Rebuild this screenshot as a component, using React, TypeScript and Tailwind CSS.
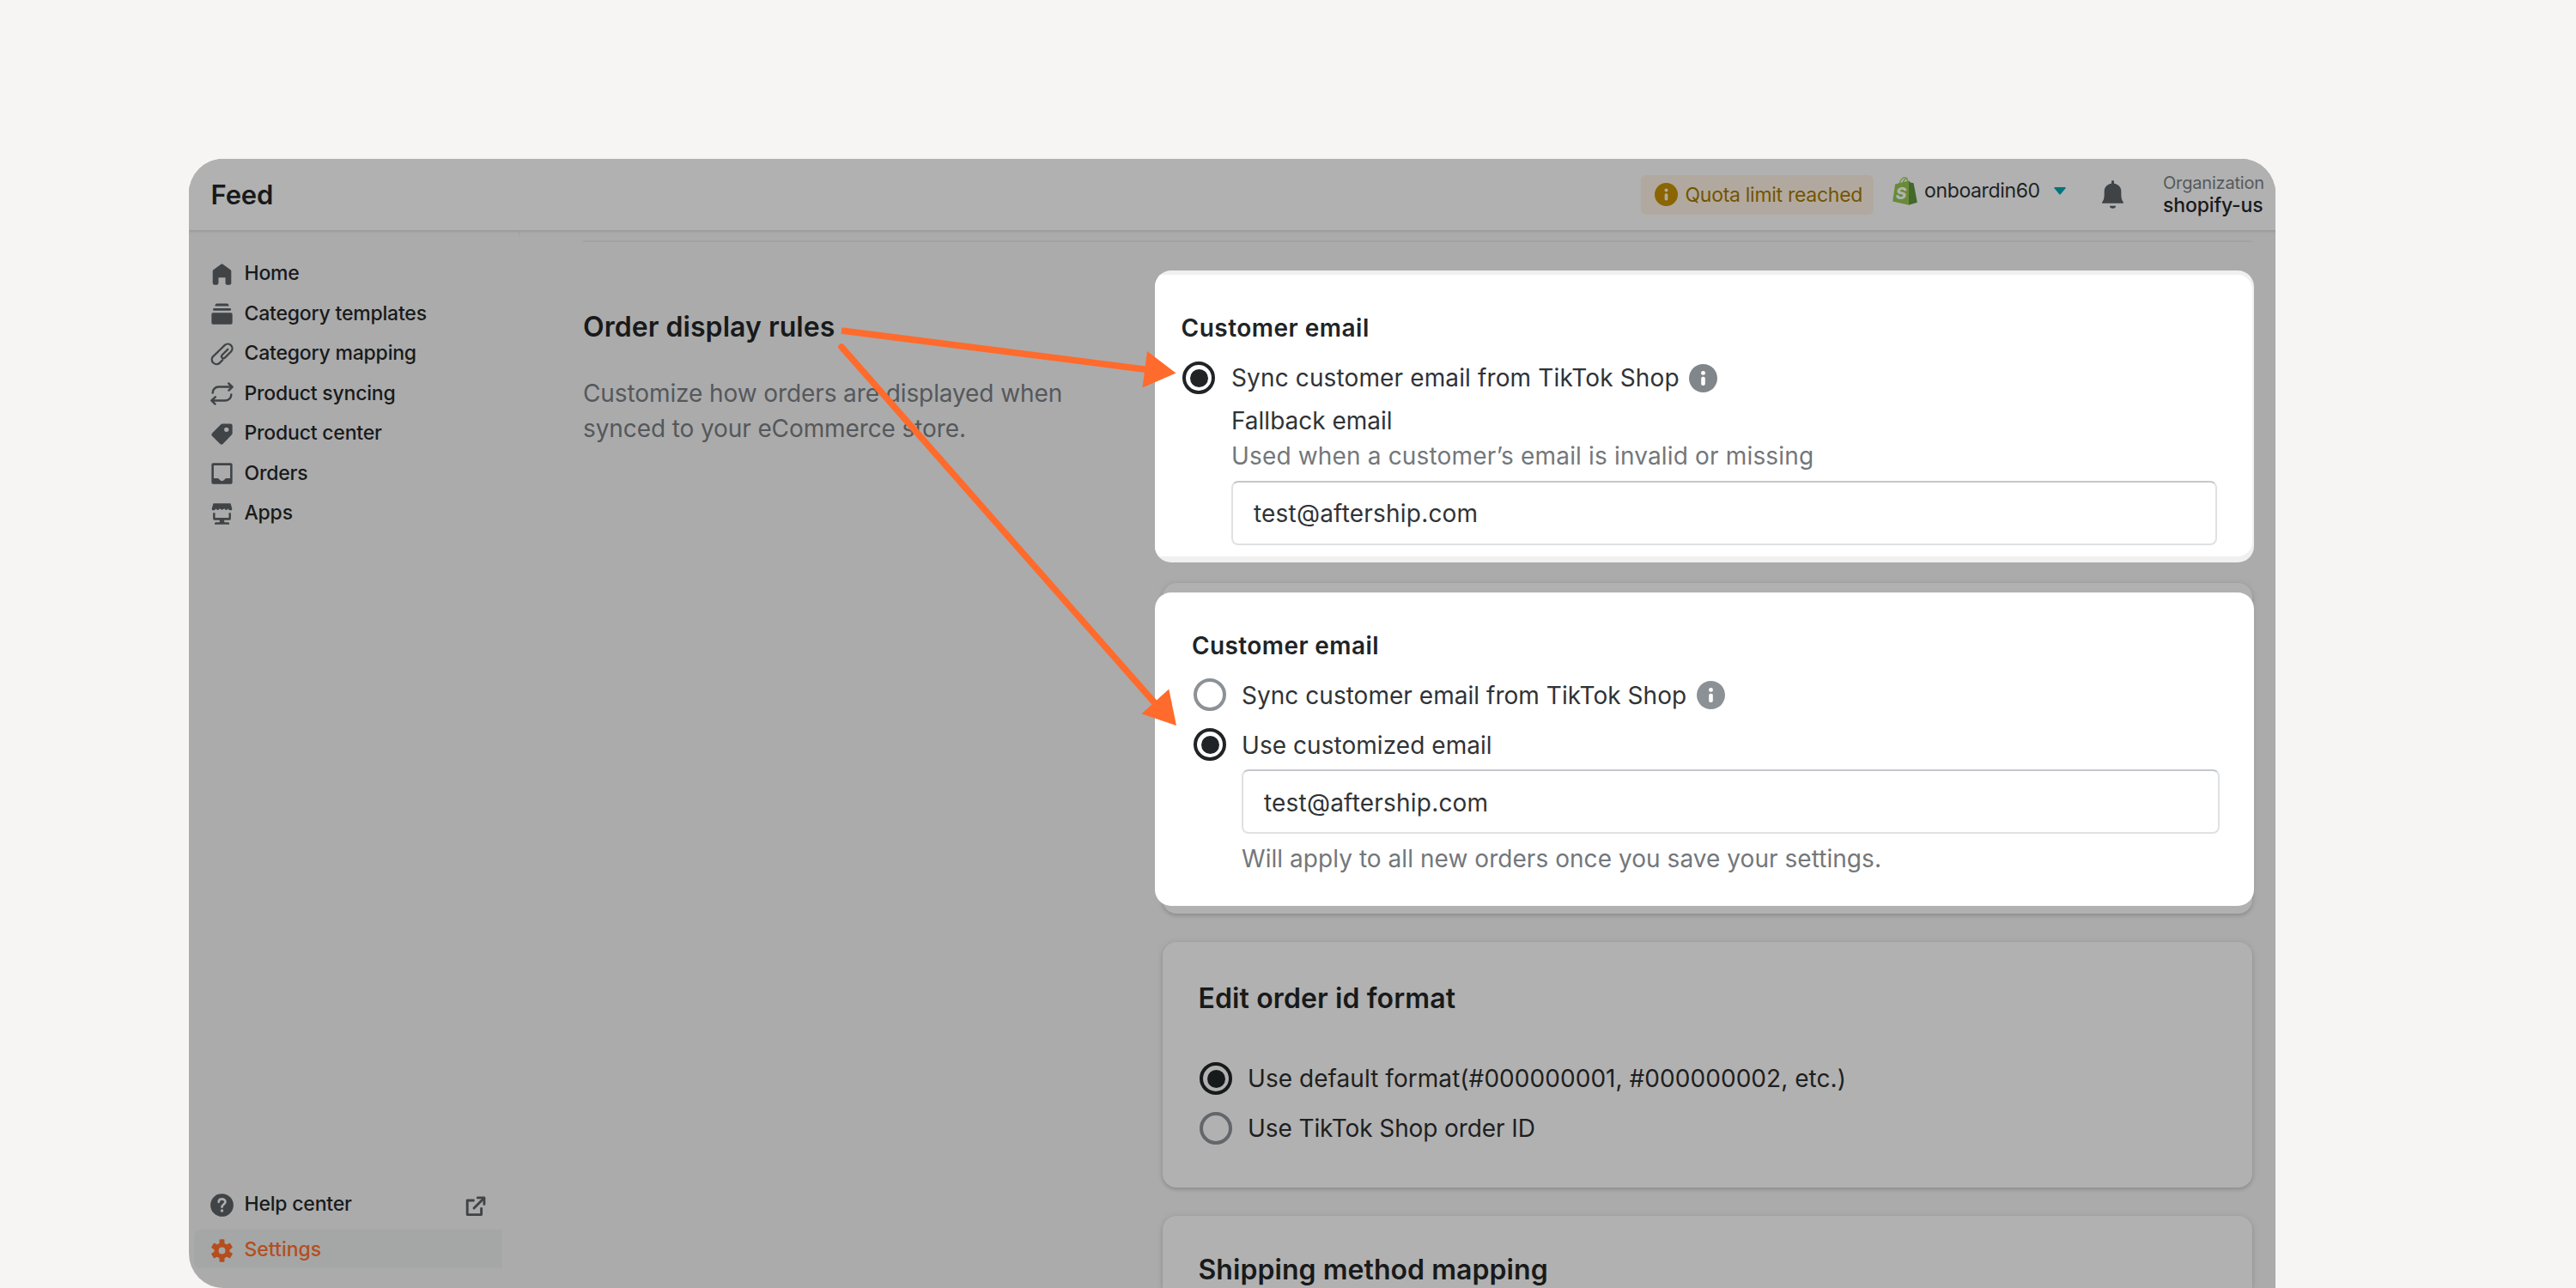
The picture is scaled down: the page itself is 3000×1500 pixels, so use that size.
import React from 'react';

interface IconProps {
  className?: string;
}

interface NavItem {
  label: string;
  icon: React.ReactNode;
}

// Sidebar icons, all on a 20x20 grid
const HomeIcon = () => (
  <svg viewBox="0 0 20 20" className="w-[27px] h-[27px]" fill="currentColor">
    <path d="M18 7.261V17.5c0 .841-.672 1.5-1.5 1.5h-2c-.828 0-1.5-.659-1.5-1.5V12.7H7v4.777C7 18.318 6.328 19 5.5 19h-2c-.828 0-1.5-.682-1.5-1.523V7.261a1.5 1.5 0 01.615-1.21l6.59-4.82a1.481 1.481 0 011.59 0l6.59 4.82A1.5 1.5 0 0118 7.26z" />
  </svg>
);

const TemplatesIcon = () => (
  <svg viewBox="0 0 20 20" className="w-[27px] h-[27px]" fill="currentColor">
    <path d="M5.6 1.1h8.8c.8 0 1.5.7 1.6 2.2H4c.1-1.5.8-2.2 1.6-2.2z" />
    <rect x="2.3" y="5.2" width="15.5" height="2" rx=".9" />
    <rect x="1" y="9.1" width="18" height="9.9" rx="1.2" />
  </svg>
);

const ClipIcon = () => (
  <svg
    viewBox="0 0 20 20"
    className="w-[27px] h-[27px]"
    fill="none"
    stroke="currentColor"
    strokeWidth="1.7"
    strokeLinecap="round"
  >
    <path d="M10.4 15.1 7.7 17.8A4 4 0 0 1 2.1 12.2L12.45 2.15A3.9 3.9 0 0 1 17.95 7.65L12.5 13.1A1.7 1.7 0 0 1 10.1 10.7L15 5.8" />
  </svg>
);

const SyncIcon = () => (
  <svg
    viewBox="0 0 20 20"
    className="w-[27px] h-[27px]"
    fill="none"
    stroke="currentColor"
    strokeWidth="1.8"
    strokeLinecap="round"
    strokeLinejoin="round"
  >
    <path d="M2 9.2A5 5 0 0 1 7 4.1H18.6M15.7 1.1L19 4.1L15.9 7.2" />
    <path d="M18 10.8A5 5 0 0 1 13 15.9H1.4M4.3 12.8L1 15.9L4.1 18.9" />
  </svg>
);

const TagIcon = () => (
  <svg viewBox="0 0 20 20" className="w-[27px] h-[27px]" fill="currentColor" fillRule="evenodd">
    <path d="M10.6 1.1H17.4A1.6 1.6 0 0 1 19 2.7V9A2.4 2.4 0 0 1 18.3 10.7L11 18.3A2 2 0 0 1 8.2 18.3L1.7 11.9A2 2 0 0 1 1.7 9.1L8.9 1.8A2.4 2.4 0 0 1 10.6 1.1ZM13.9 4.2A2 2 0 1 0 13.9 8.2A2 2 0 1 0 13.9 4.2Z" />
  </svg>
);

const OrdersIcon = () => (
  <svg viewBox="0 0 20 20" className="w-[27px] h-[27px]" fill="currentColor" fillRule="evenodd">
    <path d="M2.4 1H17.6A1.4 1.4 0 0 1 19 2.4V17.6A1.4 1.4 0 0 1 17.6 19H2.4A1.4 1.4 0 0 1 1 17.6V2.4A1.4 1.4 0 0 1 2.4 1ZM2.9 3V14.1H6.6L8.7 15.9A2 2 0 0 0 11.3 15.9L13.4 14.1H17.1V3Z" />
  </svg>
);

const AppsIcon = () => (
  <svg viewBox="0 0 20 20" className="w-[27px] h-[27px]" fill="currentColor">
    <path d="M3.3 1H16.7C17.3 1 17.6 1.3 17.7 1.8L18.7 5.4C18.8 6.4 18.4 6.9 17.6 6.9C16.4 6.9 15.6 6.4 15.2 5.4C14.6 6.5 13.8 6.9 12.6 6.3L12.4 5.4L10 6.4L7.6 5.4L7.4 6.3C6.2 6.9 5.4 6.5 4.8 5.4C4.4 6.4 3.6 6.9 2.4 6.9C1.6 6.9 1.2 6.4 1.3 5.4L2.3 1.8C2.4 1.3 2.7 1 3.3 1Z" />
    <path d="M2.3 9H4.1V13.4H15.9V9H17.7V14.2A1.1 1.1 0 0 1 16.6 15.3H12V17.2H15A1.2 1.2 0 0 1 16.2 19H3.8A1.2 1.2 0 0 1 5 17.2H8V15.3H3.4A1.1 1.1 0 0 1 2.3 14.2Z" />
  </svg>
);

const HelpIcon = () => (
  <svg viewBox="0 0 20 20" className="w-[27px] h-[27px]">
    <circle cx="10" cy="10" r="9.9" fill="currentColor" />
    <path
      d="M7.2 7.3C7.2 5.6 8.4 4.7 10 4.7S12.9 5.7 12.9 7.2C12.9 9.2 10 9.3 10 11.6"
      fill="none"
      stroke="#acacac"
      strokeWidth="2"
      strokeLinecap="round"
    />
    <circle cx="10" cy="14.9" r="1.3" fill="#acacac" />
  </svg>
);

const GearIcon = () => (
  <svg viewBox="0 0 20 20" className="w-[27px] h-[27px]" fill="currentColor">
    <circle cx="10" cy="10" r="6.7" />
    <rect x="7.8" y=".2" width="4.4" height="19.6" rx="1" />
    <rect x="7.5" y=".6" width="5" height="18.8" rx="1" transform="rotate(60 10 10)" />
    <rect x="7.5" y=".6" width="5" height="18.8" rx="1" transform="rotate(120 10 10)" />
    <circle cx="10" cy="10" r="2.9" fill="#a4a7a6" />
  </svg>
);

const ExternalIcon = () => (
  <svg viewBox="0 0 24 24" className="w-6 h-6" fill="none" stroke="currentColor" strokeWidth="2.9" strokeLinejoin="round">
    <path d="M9.5 5H2.2V21.6H18.6V14.5" strokeLinecap="round" />
    <path d="M10 14L21 3" strokeLinecap="round" />
    <path d="M14.3 1.9H21.9V9.4" strokeLinecap="round" />
  </svg>
);

const InfoIcon = ({ className }: IconProps) => (
  <svg viewBox="0 0 20 20" className={className}>
    <circle cx="10" cy="10" r="10" fill="currentColor" />
    <circle cx="10" cy="6.3" r="1.5" fill="var(--cut)" />
    <rect x="8.6" y="9" width="2.8" height="6.1" rx="1.2" fill="var(--cut)" />
  </svg>
);

const ShopifyIcon = () => (
  <svg viewBox="0 0 87 100" className="w-[29px] h-[33px]">
    <path d="M24 26C26 10 36 2 44 2C50 2 53 10 53 19M36 24C38 12 44 6 51 6" fill="none" stroke="#6f9240" strokeWidth="4" />
    <path d="M9 26L57 14V99L0 86Z" fill="#698b37" />
    <path d="M57 14L63 20L74 22L87 90L57 99Z" fill="#42692a" />
    <text x="11" y="79" fontSize="58" fontWeight="800" fontStyle="italic" fontFamily="Inter" fill="#b2b2b2">
      S
    </text>
  </svg>
);

const BellIcon = () => (
  <svg viewBox="0 0 75 98" className="w-[25px] h-[33px]" fill="#3f4346">
    <path d="M1 80C-1 76 1 74 3 72C7 66 8 58 8 46V38C8 22 20 13 33 11V4A4.500 4.500 0 0 1 42 4V11C55 13 67 22 67 38V46C67 58 68 66 72 72C74 74 76 76 74 80Z" />
    <path d="M27 89H48A10.500 9 0 0 1 27 89Z" />
  </svg>
);

const navItems: NavItem[] = [
  { label: 'Home', icon: <HomeIcon /> },
  { label: 'Category templates', icon: <TemplatesIcon /> },
  { label: 'Category mapping', icon: <ClipIcon /> },
  { label: 'Product syncing', icon: <SyncIcon /> },
  { label: 'Product center', icon: <TagIcon /> },
  { label: 'Orders', icon: <OrdersIcon /> },
  { label: 'Apps', icon: <AppsIcon /> },
];

interface RadioProps {
  checked?: boolean;
  dimmed?: boolean;
}

const Radio: React.FC<RadioProps> = ({ checked = false, dimmed = false }) => {
  const on = dimmed ? 'border-[#171a1b] text-[#171a1b]' : 'border-[#202427] text-[#202427]';
  const off = dimmed ? 'border-[#63676a]' : 'border-[#8c9196]';

  return (
    <span className={`w-[38px] h-[38px] shrink-0 rounded-full border-4 flex items-center justify-center ${checked ? on : off}`}>
      {checked && <span className="w-[21px] h-[21px] rounded-full bg-current" />}
    </span>
  );
};

const EmailInput: React.FC<{ value: string; className: string }> = ({ value, className }) => (
  <div
    className={`h-[75px] rounded-[8px] border-2 border-[#dfe1e3] border-t-[#c4c8cc] pl-[24px] flex items-center text-[28px] tracking-[0.2px] text-[#303336] ${className}`}
  >
    {value}
  </div>
);

const Header = () => (
  <header className="relative z-10 h-[83px] shrink-0 bg-[#b1b1b1] pl-[25.5px] pr-[13px] flex items-center shadow-[0_1px_2px_1px_#9b9b9b]">
    <h1 className="pt-[2px] text-[31px] font-semibold tracking-[-0.1px] text-[#181a1b]">Feed</h1>
    <div className="ml-auto w-[271px] h-[46px] rounded-[6px] bg-[#b1a99f] pl-[16px] flex items-center gap-[8.5px] text-[#735400]">
      <InfoIcon className="w-[27px] h-[27px] text-[#8a6500] [--cut:#b1a99f]" />
      <span className="pt-px text-[23px] tracking-[-0.28px] whitespace-nowrap">Quota limit reached</span>
    </div>
    <div className="ml-[22px] w-[202px] mb-2 flex items-center">
      <ShopifyIcon />
      <span className="ml-[8px] w-[136px] text-[23px] tracking-[-0.36px] whitespace-nowrap text-[#202324]">onboardin60</span>
      <svg viewBox="0 0 14 9" className="ml-auto w-[14px] h-[9px]">
        <path d="M1 0H13Q14 .4 13.500 1.300L8 8Q7 9 6 8L.5 1.300Q0 .4 1 0Z" fill="#00747c" />
      </svg>
    </div>
    <div className="ml-[42px] w-[25px]">
      <BellIcon />
    </div>
    <div className="ml-[46px] w-[118px] mb-0.5 whitespace-nowrap">
      <div className="h-[26px] leading-[26px] text-[20px] tracking-[-0.18px] text-[#56595b]">Organization</div>
      <div className="h-[26px] leading-[26px] text-[23px] font-medium tracking-[-0.15px] text-[#181a1b]">shopify-us</div>
    </div>
  </header>
);

const Sidebar = () => (
  <aside className="w-[385px] shrink-0 pt-[25px] pb-[23px] flex flex-col text-[23px] font-medium tracking-[-0.2px] text-[#181a1b]">
    {navItems.map((item) => (
      <div key={item.label} className="h-[46.5px] pl-[25px] flex items-center gap-[12.5px]">
        <span className="mt-[2px] text-[#404446]">{item.icon}</span>
        {item.label}
      </div>
    ))}
    <div className="mt-auto h-[46px] pl-[25px] pr-[39px] flex items-center gap-[12.5px]">
      <span className="mt-[4px] text-[#404446]">
        <HelpIcon />
      </span>
      <span className="pt-[2px]">Help center</span>
      <span className="ml-auto mt-[7px] text-[#404446]">
        <ExternalIcon />
      </span>
    </div>
    <div className="mt-[8px] ml-[5.5px] w-[359.5px] h-[45px] rounded-l-[8px] bg-[#a4a7a6] pl-[19.5px] flex items-center gap-[12.5px] text-[#b64d1d]">
      <span className="mt-[3px]">
        <GearIcon />
      </span>
      <span className="pt-[2px] tracking-[0px]">Settings</span>
    </div>
  </aside>
);

const dimCard = 'ml-[9px] mr-[2px] rounded-[16px] bg-[#b1b1b1] shadow-[0_2px_4px_rgba(0,0,0,0.16),0_0_10px_rgba(0,0,0,0.06)]';

// Synced email with a fallback address
const SyncedEmailCard = () => (
  <section className="mt-[33px] h-[340px] overflow-hidden rounded-[19px] bg-[#f0f0f0] pt-[5px] pb-[7px] pr-[2px]">
    <div className="h-full rounded-r-[17px] bg-white pt-[42px] pl-[32px] pr-[41px] text-[28px] text-[#303336]">
      <h3 className="-ml-[1.5px] h-[40px] leading-[41px] font-semibold tracking-[0.5px] text-[#202427]">Customer email</h3>
      <div className="mt-[18px] h-[40px] flex items-center">
        <Radio checked />
        <span className="ml-[19px] tracking-[0.13px]">Sync customer email from TikTok Shop</span>
        <InfoIcon className="ml-[11.5px] w-[33px] h-[33px] text-[#81868a] [--cut:#ffffff]" />
      </div>
      <div className="mt-[10px] ml-[57px] h-[40px] leading-[40px]">Fallback email</div>
      <div className="mt-[1px] ml-[57px] h-[40px] leading-[41px] tracking-[0.16px] text-[#73777b]">
        Used when a customer’s email is invalid or missing
      </div>
      <EmailInput value="test@aftership.com" className="mt-[9px] ml-[57px]" />
    </div>
  </section>
);

// Customized email, sits on top of a dimmed card
const CustomEmailCard = () => (
  <section className={`mt-[24px] h-[385px] pt-[11px] ${dimCard}`}>
    <div className="-ml-[9px] -mr-[2px] h-[365px] rounded-[19px] bg-white pt-[42px] pl-[45px] pr-[40px] text-[28px] text-[#303336]">
      <h3 className="-ml-[2px] h-[40px] leading-[41px] font-semibold tracking-[0.4px] text-[#202427]">Customer email</h3>
      <div className="mt-[17px] h-[40px] flex items-center">
        <Radio />
        <span className="ml-[18px] pt-px tracking-[0.03px]">Sync customer email from TikTok Shop</span>
        <InfoIcon className="ml-[12px] w-[33px] h-[33px] text-[#8c9196] [--cut:#ffffff]" />
      </div>
      <div className="mt-[18px] h-[40px] flex items-center">
        <Radio checked />
        <span className="ml-[18px] pt-[2px] tracking-[0.05px]">Use customized email</span>
      </div>
      <EmailInput value="test@aftership.com" className="mt-[9px] ml-[56px] pt-[3px]" />
      <div className="mt-[9px] ml-[56px] h-[40px] leading-[40px] tracking-[0.05px] text-[#73777b]">
        Will apply to all new orders once you save your settings.
      </div>
    </div>
  </section>
);

const OrderIdCard = () => (
  <section className={`mt-[33px] h-[286px] pt-[45px] pl-[43px] ${dimCard}`}>
    <h3 className="-ml-[1.5px] h-[40px] leading-[42px] text-[32px] font-semibold tracking-[0.12px] text-[#181a1b]">Edit order id format</h3>
    <div className="mt-[54px] h-[40px] flex items-center text-[28px] text-[#1d2021]">
      <Radio checked dimmed />
      <span className="ml-[18px] tracking-[0.05px]">Use default format(#000000001, #000000002, etc.)</span>
    </div>
    <div className="mt-[18px] h-[40px] flex items-center text-[28px] text-[#1d2021]">
      <Radio dimmed />
      <span className="ml-[18px] tracking-[-0.1px]">Use TikTok Shop order ID</span>
    </div>
  </section>
);

const ShippingCard = () => (
  <section className="mt-[33px] ml-[9px] mr-[2px] h-[84px] pt-[42px] pl-[41.5px] rounded-t-[16px] bg-[#b1b1b1] shadow-[0_2px_4px_rgba(0,0,0,0.16),0_0_10px_rgba(0,0,0,0.06)]">
    <h3 className="h-[40px] leading-[42px] text-[32px] font-semibold tracking-[0.05px] text-[#181a1b]">Shipping method mapping</h3>
  </section>
);

// Callout arrows, drawn over the window in page coordinates
const Arrows = () => (
  <svg viewBox="0 0 3000 1500" className="absolute inset-0 z-20 w-[3000px] h-[1500px] pointer-events-none">
    <g stroke="#ff6b2c" strokeWidth="7.5" fill="none">
      <path d="M980 385L1336 430.500" />
      <path d="M980 404L1346 820" strokeLinecap="round" />
    </g>
    <g fill="#ff6b2c">
      <path d="M1336 409L1369.500 434.500L1330.500 451.500Z" />
      <path d="M1361.300 802.500L1370 845L1329.500 831.300Z" />
    </g>
  </svg>
);

export default function App() {
  return (
    <div className="relative w-[3000px] h-[1500px] overflow-hidden bg-[#f6f5f3] pt-[185px] pl-[220px] font-['Inter',sans-serif]">
      <div className="w-[2430px] h-[1315px] overflow-hidden rounded-t-[40px] rounded-bl-[40px] bg-[#ababab] flex flex-col">
        <Header />
        <div className="flex-1 min-h-0 pt-[2px] flex">
          <Sidebar />
          <div className="-ml-px w-px h-[5px] shrink-0 bg-[#a0a0a0]" />
          <main className="flex-1 pt-[10px] pl-[74px]">
            <div className="h-[2px] mr-[27px] bg-[#a3a3a3]" />
            <div className="flex">
              <div className="w-[666px] shrink-0 pt-[78px]">
                <h2 className="h-[40px] leading-[42px] text-[32px] font-semibold tracking-[0.05px] text-[#181a1b]">Order display rules</h2>
                <p className="mt-[38px] text-[28px] leading-[40.5px] tracking-[-0.1px] text-[#55585b]">
                  Customize how orders are displayed when
                  <br />
                  synced to your eCommerce store.
                </p>
              </div>
              <div className="w-[1280px] shrink-0">
                <SyncedEmailCard />
                <CustomEmailCard />
                <OrderIdCard />
                <ShippingCard />
              </div>
            </div>
          </main>
        </div>
      </div>
      <Arrows />
    </div>
  );
}
